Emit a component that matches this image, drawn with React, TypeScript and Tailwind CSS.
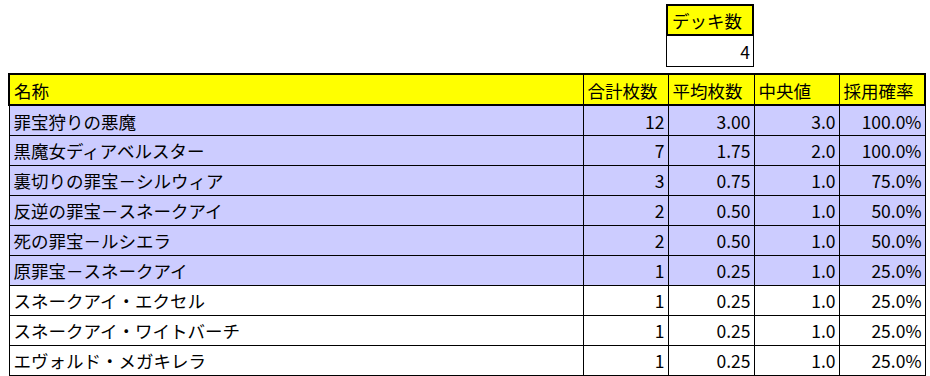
import React from 'react';

type Row = {
  name: string;
  total: number;
  avg: string;
  median: string;
  rate: string;
  hit: boolean;
};

const rows: Row[] = [
  { name: '罪宝狩りの悪魔', total: 12, avg: '3.00', median: '3.0', rate: '100.0%', hit: true },
  { name: '黒魔女ディアベルスター', total: 7, avg: '1.75', median: '2.0', rate: '100.0%', hit: true },
  { name: '裏切りの罪宝－シルウィア', total: 3, avg: '0.75', median: '1.0', rate: '75.0%', hit: true },
  { name: '反逆の罪宝－スネークアイ', total: 2, avg: '0.50', median: '1.0', rate: '50.0%', hit: true },
  { name: '死の罪宝－ルシエラ', total: 2, avg: '0.50', median: '1.0', rate: '50.0%', hit: true },
  { name: '原罪宝－スネークアイ', total: 1, avg: '0.25', median: '1.0', rate: '25.0%', hit: true },
  { name: 'スネークアイ・エクセル', total: 1, avg: '0.25', median: '1.0', rate: '25.0%', hit: false },
  { name: 'スネークアイ・ワイトバーチ', total: 1, avg: '0.25', median: '1.0', rate: '25.0%', hit: false },
  { name: 'エヴォルド・メガキレラ', total: 1, avg: '0.25', median: '1.0', rate: '25.0%', hit: false },
];

const headers = ['名称', '合計枚数', '平均枚数', '中央値', '採用確率'];

const font = 'font-["Noto_Sans_CJK_JP","Noto_Sans",sans-serif] text-[17.5px] leading-none text-black';

export default function App() {
  return (
    <div className={`h-[376px] w-[930px] bg-white ${font}`}>
      <div className="ml-[666px] w-[88px] pt-[4px]">
        <div className="flex h-[32px] items-center border-2 border-black bg-[#ffff00] px-[4px] pt-[2px]">
          デッキ数
        </div>
        <div className="flex h-[31px] items-center justify-end border border-t-0 border-black bg-white px-[3px] pt-[2px]">
          4
        </div>
      </div>

      <table className="mt-[6px] ml-[8px] w-[916px] table-fixed border-collapse">
        <colgroup>
          <col className="w-[574px]" />
          <col className="w-[85px]" />
          <col className="w-[86px]" />
          <col className="w-[85px]" />
          <col className="w-[86px]" />
        </colgroup>
        <thead>
          <tr className="h-[31px] bg-[#ffff00]">
            {headers.map((h, i) => (
              <th
                key={h}
                className={
                  'border-y-2 border-black px-[4px] pt-[2px] text-left font-normal ' +
                  (i === 0 ? 'border-l-2 border-r ' : i === headers.length - 1 ? 'border-r-2 border-l ' : 'border-x ')
                }
              >
                {h}
              </th>
            ))}
          </tr>
        </thead>
        <tbody>
          {rows.map((r) => (
            <tr key={r.name} className={'h-[30px] ' + (r.hit ? 'bg-[#ccccff]' : 'bg-white')}>
              <td className="border border-black px-[4px] pt-[2px] text-left whitespace-nowrap">{r.name}</td>
              <td className="border border-black px-[3px] pt-[2px] text-right">{r.total}</td>
              <td className="border border-black px-[3px] pt-[2px] text-right">{r.avg}</td>
              <td className="border border-black px-[3px] pt-[2px] text-right">{r.median}</td>
              <td className="border border-black px-[3px] pt-[2px] text-right">{r.rate}</td>
            </tr>
          ))}
        </tbody>
      </table>
    </div>
  );
}
